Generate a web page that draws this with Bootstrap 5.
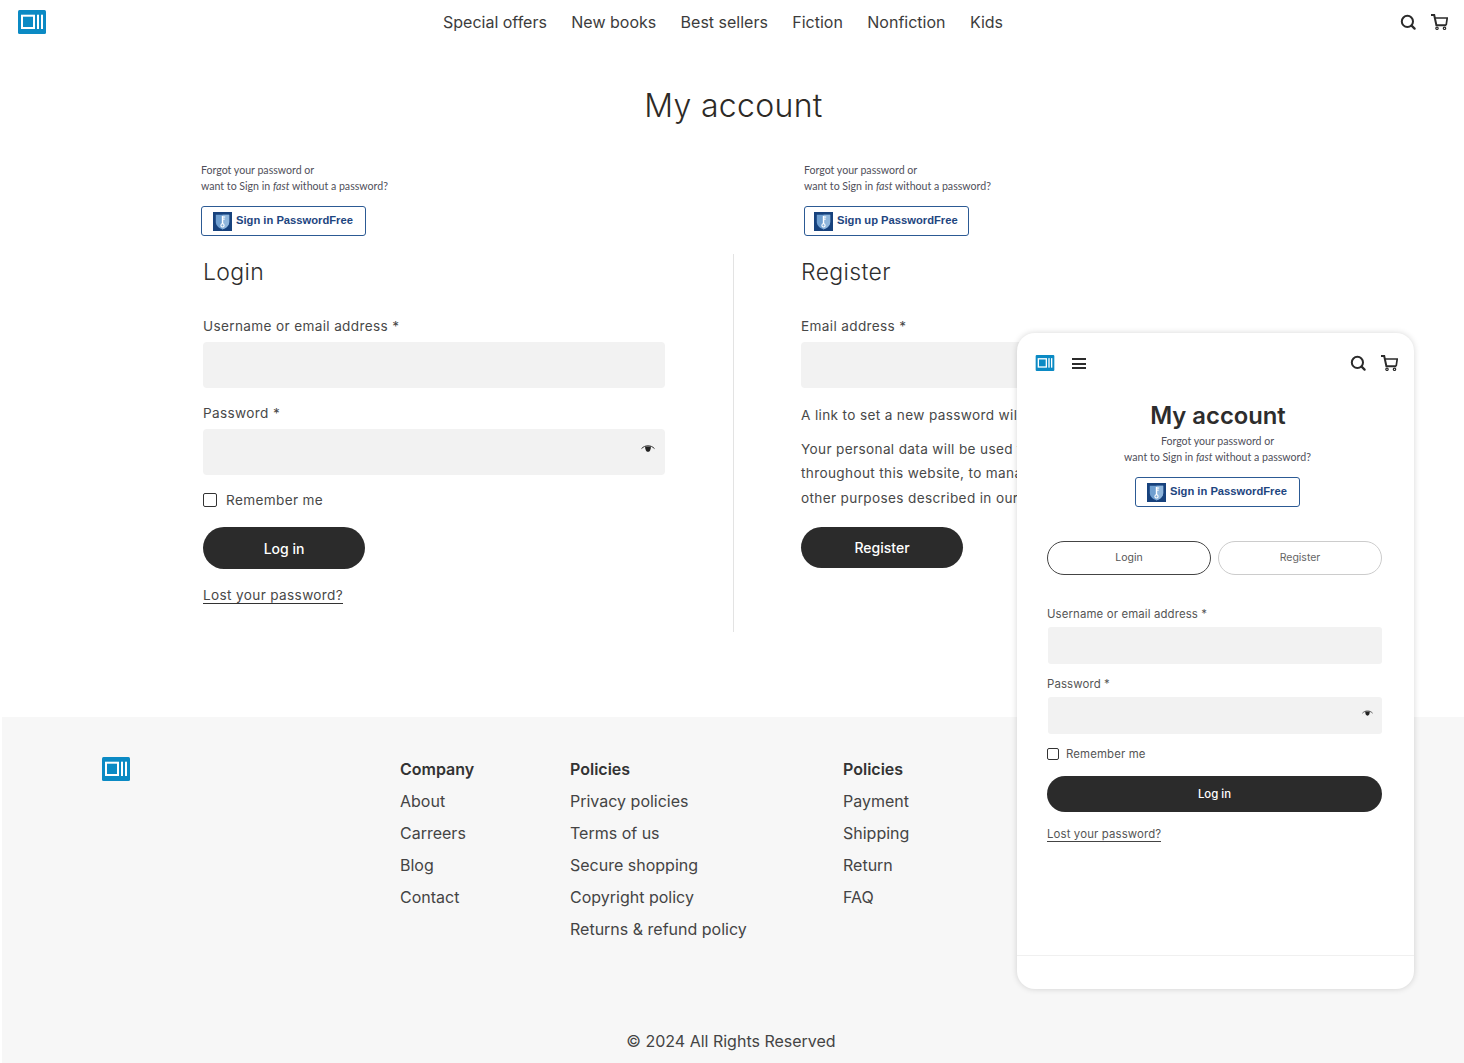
<!DOCTYPE html>
<html lang="en">
<head>
<meta charset="utf-8">
<title>My account</title>
<link href="https://cdn.jsdelivr.net/npm/bootstrap@5.3.0/dist/css/bootstrap.min.css" rel="stylesheet">
<style>
body{font-family:Inter,"Liberation Sans",sans-serif;color:#2b2b2b;background:#fff;font-size:15px;position:relative;height:1063px;overflow:hidden}
.top-bar{height:44px;padding:0 16px 0 18px}
.brand-box{display:block;width:28px;height:24px}
.top-links{gap:24.4px;font-size:16px;color:#3c3c3c;margin-left:397px}
.top-links a{color:inherit;text-decoration:none}
.tool-icons{gap:15px}
.page-title{font-size:32px;font-weight:300;letter-spacing:.3px;text-align:center;margin:42px 0 0;padding-left:3px;line-height:40px;color:#2d2a26;height:40px}
.pf-row{margin-top:36px;height:84px}
.pf-block{font-family:Lato,"Noto Sans",sans-serif;font-size:10.6px;line-height:16px;color:#50505a}
.pf-left{margin-left:201px;width:603px}
.pf-btn{display:inline-flex;align-items:center;gap:4px;width:165px;height:30px;margin-top:12px;padding:0 0 0 11px;border:1px solid #2c5a94;border-radius:3px;background:#fff;font-family:"Liberation Sans",sans-serif;font-weight:700;font-size:11.2px;color:#1d4580;white-space:nowrap}
.pf-label{padding-bottom:2px}
.pf-up{padding-left:9px}
.forms-row{margin-top:8px;height:396px}
.form-login{margin-left:203px;width:462px;padding-top:3px}
.vrule{width:1px;background:#e3e3e3;margin-left:68px;height:378px}
.form-reg{margin-left:67px;width:462px;padding-top:3px;color:#484848;font-size:13.6px;letter-spacing:.35px}
.sec-title{font-size:23px;font-weight:300;line-height:30px;margin:0 0 29px;color:#2f2f2f;letter-spacing:.35px}
.fld-label{display:block;font-size:13.6px;line-height:20px;letter-spacing:.35px;color:#484848;margin-bottom:6px}
.fld-box{height:46px;background:#f2f2f2;border-radius:4px;margin-bottom:15px;position:relative}
.eye-mark{position:absolute;right:10px;top:16px}
.check-row{font-size:13.6px;letter-spacing:.35px;color:#484848;gap:9px;margin-top:3px;line-height:20px}
.check-box{width:14px;height:14px;border:1.5px solid #333;border-radius:2px;background:#fff;display:block}
.pill-dark{display:flex;align-items:center;justify-content:center;width:162px;height:42px;border-radius:21px;background:#2b2b2b;color:#fff;font-weight:500;font-size:14px;border:0;padding:0}
.log-btn{margin-top:17px}
.lost-wrap{margin-top:15px}
.lost-link{color:#484848;font-size:13.6px;letter-spacing:.35px;text-decoration:none;border-bottom:1px solid #333;line-height:16px;display:inline-block}
.reg-copy{line-height:24.5px;margin:0;white-space:nowrap}
.reg-first{margin:2px 0 9px}
.reg-btn{margin-top:17px;height:41px}
.foot-zone{position:absolute;left:2px;right:0;top:717px;height:346px;background:#f7f7f7}
.foot-logo{position:absolute;left:100px;top:40px}
.foot-cols{padding-left:398px;padding-top:41px}
.foot-col h6{font-size:16px;font-weight:600;line-height:22px;margin:0 0 10px;color:#333}
.foot-col a{display:block;color:#444;font-size:16px;line-height:22px;margin-bottom:10px;text-decoration:none}
.col-a{width:170px}.col-b{width:273px}
.copy-line{position:absolute;left:0;right:4px;top:313px;text-align:center;font-size:16px;line-height:22px;color:#444}
.phone-frame{position:absolute;left:1017px;top:333px;width:397px;height:656px;background:#fff;border-radius:18px;box-shadow:0 0 6px rgba(0,0,0,.16);overflow:hidden;z-index:5}
.ph-top{position:relative;height:60px}
.ph-logo{position:absolute;left:18px;top:22px}
.ph-burger{position:absolute;left:55px;top:25px;width:14px;height:11px;border-top:2px solid #2b2b2b;border-bottom:2px solid #2b2b2b}
.ph-burger::after{content:"";display:block;height:2px;margin-top:2.5px;background:#2b2b2b}
.ph-icons{position:absolute;left:333px;top:22px;gap:15px}
.ph-title{font-size:23.8px;font-weight:600;text-align:center;line-height:30px;margin:8px 0 0;color:#2d2d2d;padding-left:5px}
.ph-pf{text-align:center;margin-top:2px;padding-left:4px}
.ph-pf .pf-btn{margin-top:12px;text-align:left}
.tab-row{gap:7px;margin:34px 32px 0 30px}
.tab-pill{flex:1;height:34px;border-radius:17px;border:1px solid #ccc;font-size:10.5px;color:#666;display:flex;align-items:center;justify-content:center;background:#fff}
.tab-on{border:1.5px solid #444;color:#555}
.ph-form{padding:32px 32px 0 30px}
.ph-label{display:block;font-size:11.4px;letter-spacing:.13px;line-height:14px;color:#555;margin-bottom:6px}
.ph-box{height:37px;background:#f2f2f2;border-radius:3px;margin:0 0 13px 1px;position:relative}
.ph-box .eye-mark{right:9px;top:13px}
.ph-check{font-size:11.4px;letter-spacing:.13px;color:#555;gap:7px;line-height:14px;margin-top:2px}
.ph-check .check-box{width:12px;height:12px;border-width:1.2px}
.ph-dark{width:100%;height:36px;border-radius:18px;font-size:11.4px;margin-top:15px;padding-top:2px}
.ph-lost{color:#555;font-size:11.4px;letter-spacing:.13px;line-height:13px;text-decoration:none;border-bottom:1px solid #444;display:inline-block;margin-top:16px}
.ph-rule{position:absolute;left:0;right:0;top:622px;border-top:1px solid #f0f0f0}
</style>
</head>
<body>
<svg width="0" height="0" class="position-absolute">
<defs>
<symbol id="logo-mark" viewBox="0 0 28 24"><rect width="28" height="24" rx="1.5" fill="#0b8ac4"/><rect x="4" y="5.700" width="12" height="12.300" fill="none" stroke="#fff" stroke-width="2"/><rect x="19" y="4.700" width="2" height="14.300" fill="#fff"/><rect x="23" y="4.700" width="2" height="14.300" fill="#fff"/></symbol>
<symbol id="lens-mark" viewBox="0 0 16 16"><circle cx="7.4" cy="7.4" r="5.6" fill="none" stroke="#2b2b2b" stroke-width="2"/><path d="M11.6 11.6l3 3" stroke="#2b2b2b" stroke-width="2.2" stroke-linecap="round"/></symbol>
<symbol id="cart-mark" viewBox="0 0 17 16"><path d="M0 1h3.200l2.200 10.300h10" fill="none" stroke="#2b2b2b" stroke-width="2"/><path d="M4 4h12.200l-1 7" fill="none" stroke="#2b2b2b" stroke-width="1.700"/><circle cx="6" cy="14.300" r="1.200" fill="none" stroke="#2b2b2b" stroke-width="1.200"/><circle cx="13.500" cy="14.300" r="1.200" fill="none" stroke="#2b2b2b" stroke-width="1.200"/></symbol>
<symbol id="pf-mark" viewBox="0 0 19 19"><rect width="19" height="19" fill="#17427d"/><path d="M2.800 2.800h13.400v7c0 4-3 6.200-6.700 7.600C5.800 16 2.800 13.800 2.800 9.800z" fill="#6f9fd0"/><path d="M9.500 2.800h6.700v7c0 4-3 6.200-6.700 7.600z" fill="#8fb6dc"/><rect x="8.800" y="4" width="1.400" height="8" fill="#fff"/><rect x="10" y="4.500" width="2.200" height="1.100" fill="#fff"/><rect x="10" y="6.600" width="1.700" height="1.100" fill="#fff"/><circle cx="9.500" cy="13.400" r="1.600" fill="none" stroke="#fff" stroke-width="1.100"/></symbol>
<symbol id="eye-mark" viewBox="0 0 14 8"><path d="M.5 3.600C2.500 1.600 4.500.8 7 .8s4.500.8 6.500 2.800" fill="none" stroke="#333" stroke-width="1"/><path d="M4.200 1.400h5.600c.3 2.600-1 5.400-2.800 5.400S3.900 4 4.200 1.400z" fill="#222"/></symbol>
</defs>
</svg>

<header class="top-bar d-flex align-items-center">
<svg class="brand-box" aria-label="logo"><use href="#logo-mark"/></svg>
<nav class="top-links d-flex">
<a href="#">Special offers</a><a href="#">New books</a><a href="#">Best sellers</a><a href="#">Fiction</a><a href="#">Nonfiction</a><a href="#">Kids</a>
</nav>
<div class="tool-icons d-flex align-items-center ms-auto">
<svg width="16" height="16"><use href="#lens-mark"/></svg>
<svg width="17" height="16"><use href="#cart-mark"/></svg>
</div>
</header>

<main>
<h1 class="page-title">My account</h1>
<div class="pf-row d-flex">
<div class="pf-block pf-left">Forgot your password or<br>want to Sign in <em>fast</em> without a password?<br>
<span class="pf-btn"><svg width="19" height="19"><use href="#pf-mark"/></svg><span class="pf-label">Sign in PasswordFree</span></span></div>
<div class="pf-block">Forgot your password or<br>want to Sign in <em>fast</em> without a password?<br>
<span class="pf-btn pf-up"><svg width="19" height="19"><use href="#pf-mark"/></svg><span class="pf-label">Sign up PasswordFree</span></span></div>
</div>
<div class="forms-row d-flex">
<section class="form-login">
<h2 class="sec-title">Login</h2>
<label class="fld-label">Username or email address *</label>
<div class="fld-box"></div>
<label class="fld-label">Password *</label>
<div class="fld-box"><svg class="eye-mark" width="14" height="8"><use href="#eye-mark"/></svg></div>
<div class="check-row d-flex align-items-center"><span class="check-box"></span><span>Remember me</span></div>
<button class="pill-dark log-btn" type="button">Log in</button>
<div class="lost-wrap"><a class="lost-link" href="#">Lost your password?</a></div>
</section>
<div class="vrule"></div>
<section class="form-reg">
<h2 class="sec-title">Register</h2>
<label class="fld-label">Email address *</label>
<div class="fld-box"></div>
<p class="reg-copy reg-first">A link to set a new password will be sent</p>
<p class="reg-copy">Your personal data will be used to support<br>throughout this website, to manage access<br>other purposes described in our privacy</p>
<button class="pill-dark reg-btn" type="button">Register</button>
</section>
</div>
</main>

<footer class="foot-zone">
<svg class="foot-logo" width="28" height="24"><use href="#logo-mark"/></svg>
<div class="foot-cols d-flex">
<div class="foot-col col-a"><h6>Company</h6><a href="#">About</a><a href="#">Carreers</a><a href="#">Blog</a><a href="#">Contact</a></div>
<div class="foot-col col-b"><h6>Policies</h6><a href="#">Privacy policies</a><a href="#">Terms of us</a><a href="#">Secure shopping</a><a href="#">Copyright policy</a><a href="#">Returns &amp; refund policy</a></div>
<div class="foot-col"><h6>Policies</h6><a href="#">Payment</a><a href="#">Shipping</a><a href="#">Return</a><a href="#">FAQ</a></div>
</div>
<div class="copy-line">© 2024 All Rights Reserved</div>
</footer>

<aside class="phone-frame">
<div class="ph-top">
<svg class="ph-logo" width="20" height="16"><use href="#logo-mark"/></svg>
<span class="ph-burger"></span>
<div class="ph-icons d-flex align-items-center"><svg width="16" height="16"><use href="#lens-mark"/></svg><svg width="17" height="16"><use href="#cart-mark"/></svg></div>
</div>
<div class="ph-title">My account</div>
<div class="pf-block ph-pf">Forgot your password or<br>want to Sign in <em>fast</em> without a password?<br>
<span class="pf-btn"><svg width="19" height="19"><use href="#pf-mark"/></svg><span class="pf-label">Sign in PasswordFree</span></span></div>
<div class="tab-row d-flex"><span class="tab-pill tab-on">Login</span><span class="tab-pill">Register</span></div>
<div class="ph-form">
<label class="ph-label">Username or email address *</label>
<div class="ph-box"></div>
<label class="ph-label">Password *</label>
<div class="ph-box"><svg class="eye-mark" width="11" height="7"><use href="#eye-mark"/></svg></div>
<div class="ph-check d-flex align-items-center"><span class="check-box"></span><span>Remember me</span></div>
<button class="pill-dark ph-dark" type="button">Log in</button>
<a class="ph-lost" href="#">Lost your password?</a>
</div>
<div class="ph-rule"></div>
</aside>
<script src="https://cdn.jsdelivr.net/npm/bootstrap@5.3.0/dist/js/bootstrap.bundle.min.js"></script>
</body>
</html>
